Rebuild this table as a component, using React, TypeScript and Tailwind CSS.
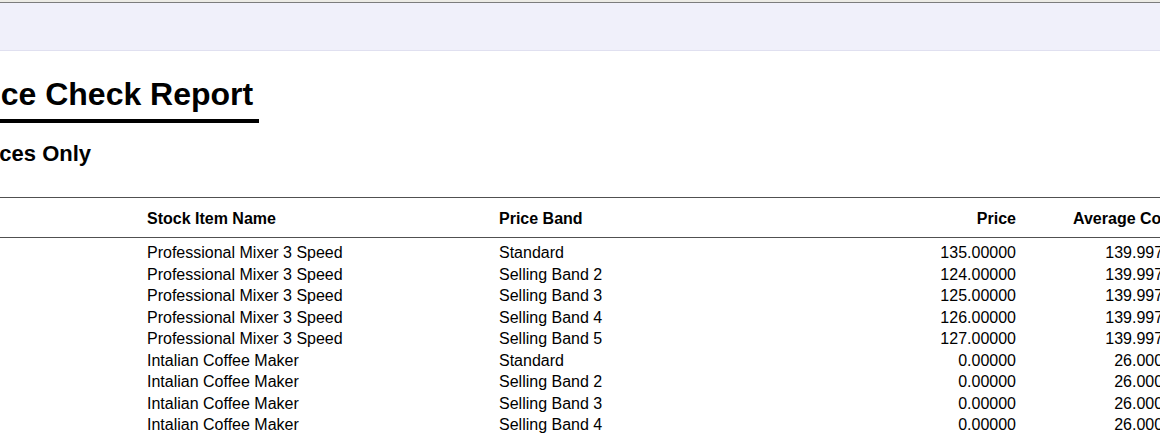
import React, { FC } from "react";

const rows = [
  { name: "Professional Mixer 3 Speed", band: "Standard", price: "135.00000", cost: "139.9975" },
  { name: "Professional Mixer 3 Speed", band: "Selling Band 2", price: "124.00000", cost: "139.9975" },
  { name: "Professional Mixer 3 Speed", band: "Selling Band 3", price: "125.00000", cost: "139.9975" },
  { name: "Professional Mixer 3 Speed", band: "Selling Band 4", price: "126.00000", cost: "139.9975" },
  { name: "Professional Mixer 3 Speed", band: "Selling Band 5", price: "127.00000", cost: "139.9975" },
  { name: "Intalian Coffee Maker", band: "Standard", price: "0.00000", cost: "26.0000" },
  { name: "Intalian Coffee Maker", band: "Selling Band 2", price: "0.00000", cost: "26.0000" },
  { name: "Intalian Coffee Maker", band: "Selling Band 3", price: "0.00000", cost: "26.0000" },
  { name: "Intalian Coffee Maker", band: "Selling Band 4", price: "0.00000", cost: "26.0000" },
  { name: "Intalian Coffee Maker", band: "Selling Band 5", price: "0.00000", cost: "26.0000" },
];

const App: FC = (): JSX.Element => {
  return (
    <div className="w-[1160px] h-[438px] overflow-hidden bg-white text-black font-['Liberation_Sans',Arial,sans-serif]">
      {/* toolbar strip */}
      <div className="border-t-2 border-[#ecebe5]">
        <div className="h-[49px] border-t border-[#7c7c7c] border-b border-b-[#e0e0f0] bg-[#f0f0fa]" />
      </div>

      {/* headings */}
      <div className="mt-[27px]">
        <h1 className="inline-block -ml-[42px] pr-[6px] pb-[9px] border-b-4 border-black text-[32px] leading-none font-bold">
          Price Check Report
        </h1>
      </div>
      <h2 className="mt-[20px] -ml-[30px] text-[22px] leading-none font-bold">Prices Only</h2>

      {/* table */}
      <div className="mt-[32px] w-[1172px] text-[16px]">
        <div className="grid grid-cols-[147px_352px_301px_216px_156px] h-[41px] pt-[2px] items-center border-y border-[#505050] font-bold">
          <div />
          <div>Stock Item Name</div>
          <div>Price Band</div>
          <div className="text-right">Price</div>
          <div className="pl-[57px] whitespace-nowrap">Average Cost</div>
        </div>
        <div className="pt-[4px]">
          {rows.map((r, i) => (
            <div key={i} className="grid grid-cols-[147px_352px_301px_216px_156px] leading-[21.5px]">
              <div />
              <div>{r.name}</div>
              <div>{r.band}</div>
              <div className="text-right">{r.price}</div>
              <div className="text-right">{r.cost}</div>
            </div>
          ))}
        </div>
      </div>
    </div>
  );
};

export default App;
